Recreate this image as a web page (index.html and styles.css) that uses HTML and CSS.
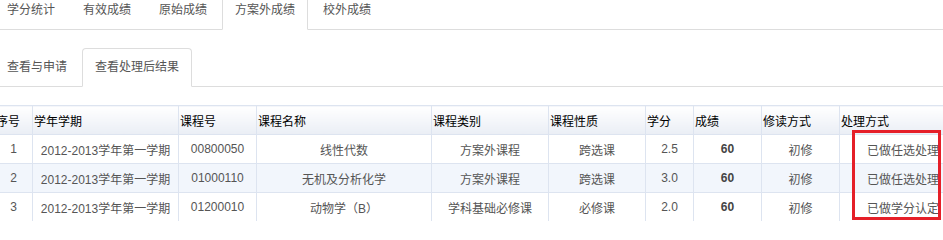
FILE: index.html
```html
<!DOCTYPE html>
<html lang="zh-CN">
<head>
<meta charset="utf-8">
<title>方案外成绩</title>
<link rel="stylesheet" href="styles.css">
</head>
<body>
<div class="page">
  <ul class="tabs tabs-main">
    <li><a>学分统计</a></li>
    <li><a>有效成绩</a></li>
    <li><a>原始成绩</a></li>
    <li class="active"><a>方案外成绩</a></li>
    <li><a>校外成绩</a></li>
  </ul>
  <ul class="tabs tabs-sub">
    <li><a>查看与申请</a></li>
    <li class="active"><a>查看处理后结果</a></li>
  </ul>
  <table class="grid">
    <colgroup>
      <col class="c1"><col class="c2"><col class="c3"><col class="c4"><col class="c5">
      <col class="c6"><col class="c7"><col class="c8"><col class="c9"><col class="c10">
    </colgroup>
    <thead>
      <tr>
        <th>序号</th><th>学年学期</th><th>课程号</th><th>课程名称</th><th>课程类别</th>
        <th>课程性质</th><th>学分</th><th>成绩</th><th>修读方式</th><th>处理方式</th>
      </tr>
    </thead>
    <tbody>
      <tr>
        <td>1</td><td>2012-2013学年第一学期</td><td>00800050</td><td>线性代数</td><td>方案外课程</td>
        <td>跨选课</td><td>2.5</td><td class="score">60</td><td>初修</td><td>已做任选处理</td>
      </tr>
      <tr class="alt">
        <td>2</td><td>2012-2013学年第一学期</td><td>01000110</td><td>无机及分析化学</td><td>方案外课程</td>
        <td>跨选课</td><td>3.0</td><td class="score">60</td><td>初修</td><td>已做任选处理</td>
      </tr>
      <tr>
        <td>3</td><td>2012-2013学年第一学期</td><td>01200010</td><td>动物学（B）</td><td>学科基础必修课</td>
        <td>必修课</td><td>2.0</td><td class="score">60</td><td>初修</td><td>已做学分认定</td>
      </tr>
    </tbody>
  </table>
  <div class="highlight"></div>
</div>
</body>
</html>
```

FILE: styles.css
```css
html, body {
  margin: 0;
  padding: 0;
  background: #fff;
  overflow: hidden;
}
body {
  width: 943px;
  height: 221px;
  position: relative;
  font-family: "Liberation Sans", "Noto Sans CJK SC", sans-serif;
  font-size: 12px;
  color: #555;
}
.page {
  margin-left: -6px;
  width: 1000px;
}
.tabs {
  list-style: none;
  margin: 0;
  padding: 0;
  display: flex;
  border-bottom: 1px solid #ddd;
}
.tabs-main {
  margin-top: -9px;
}
.tabs-sub {
  margin-top: 18px;
}
.tabs li {
  margin-bottom: -1px;
  margin-right: 2px;
}
.tabs a {
  display: block;
  padding: 0 12px;
  line-height: 37px;
  border: 1px solid transparent;
  border-radius: 4px 4px 0 0;
  color: #555;
  white-space: nowrap;
}
.tabs li.active a {
  border-color: #ddd;
  border-bottom-color: #fff;
  background: #fff;
}
.grid {
  margin-top: 18px;
  border-collapse: collapse;
  table-layout: fixed;
  width: 972px;
}
.c1 { width: 38px; }
.c2 { width: 146px; }
.c3 { width: 78px; }
.c4 { width: 175px; }
.c5 { width: 117px; }
.c6 { width: 97px; }
.c7 { width: 48px; }
.c8 { width: 68px; }
.c9 { width: 78px; }
.c10 { width: 127px; }
.grid th, .grid td {
  border: 1px solid #dde4f0;
  height: 28px;
  padding: 0;
  white-space: nowrap;
  overflow: hidden;
}
.grid th {
  text-align: left;
  padding-left: 1px;
  font-weight: normal;
  color: #000;
  background: linear-gradient(#ffffff, #eaeef5);
}
.grid td {
  text-align: center;
  color: #555;
}
.grid tr.alt td {
  background: #f2f6fc;
}
.grid td.score {
  font-weight: bold;
  color: #444;
}
.highlight {
  position: absolute;
  left: 852px;
  top: 130px;
  width: 89px;
  height: 90px;
  box-sizing: border-box;
  border: 3px solid #e51f28;
}
```
